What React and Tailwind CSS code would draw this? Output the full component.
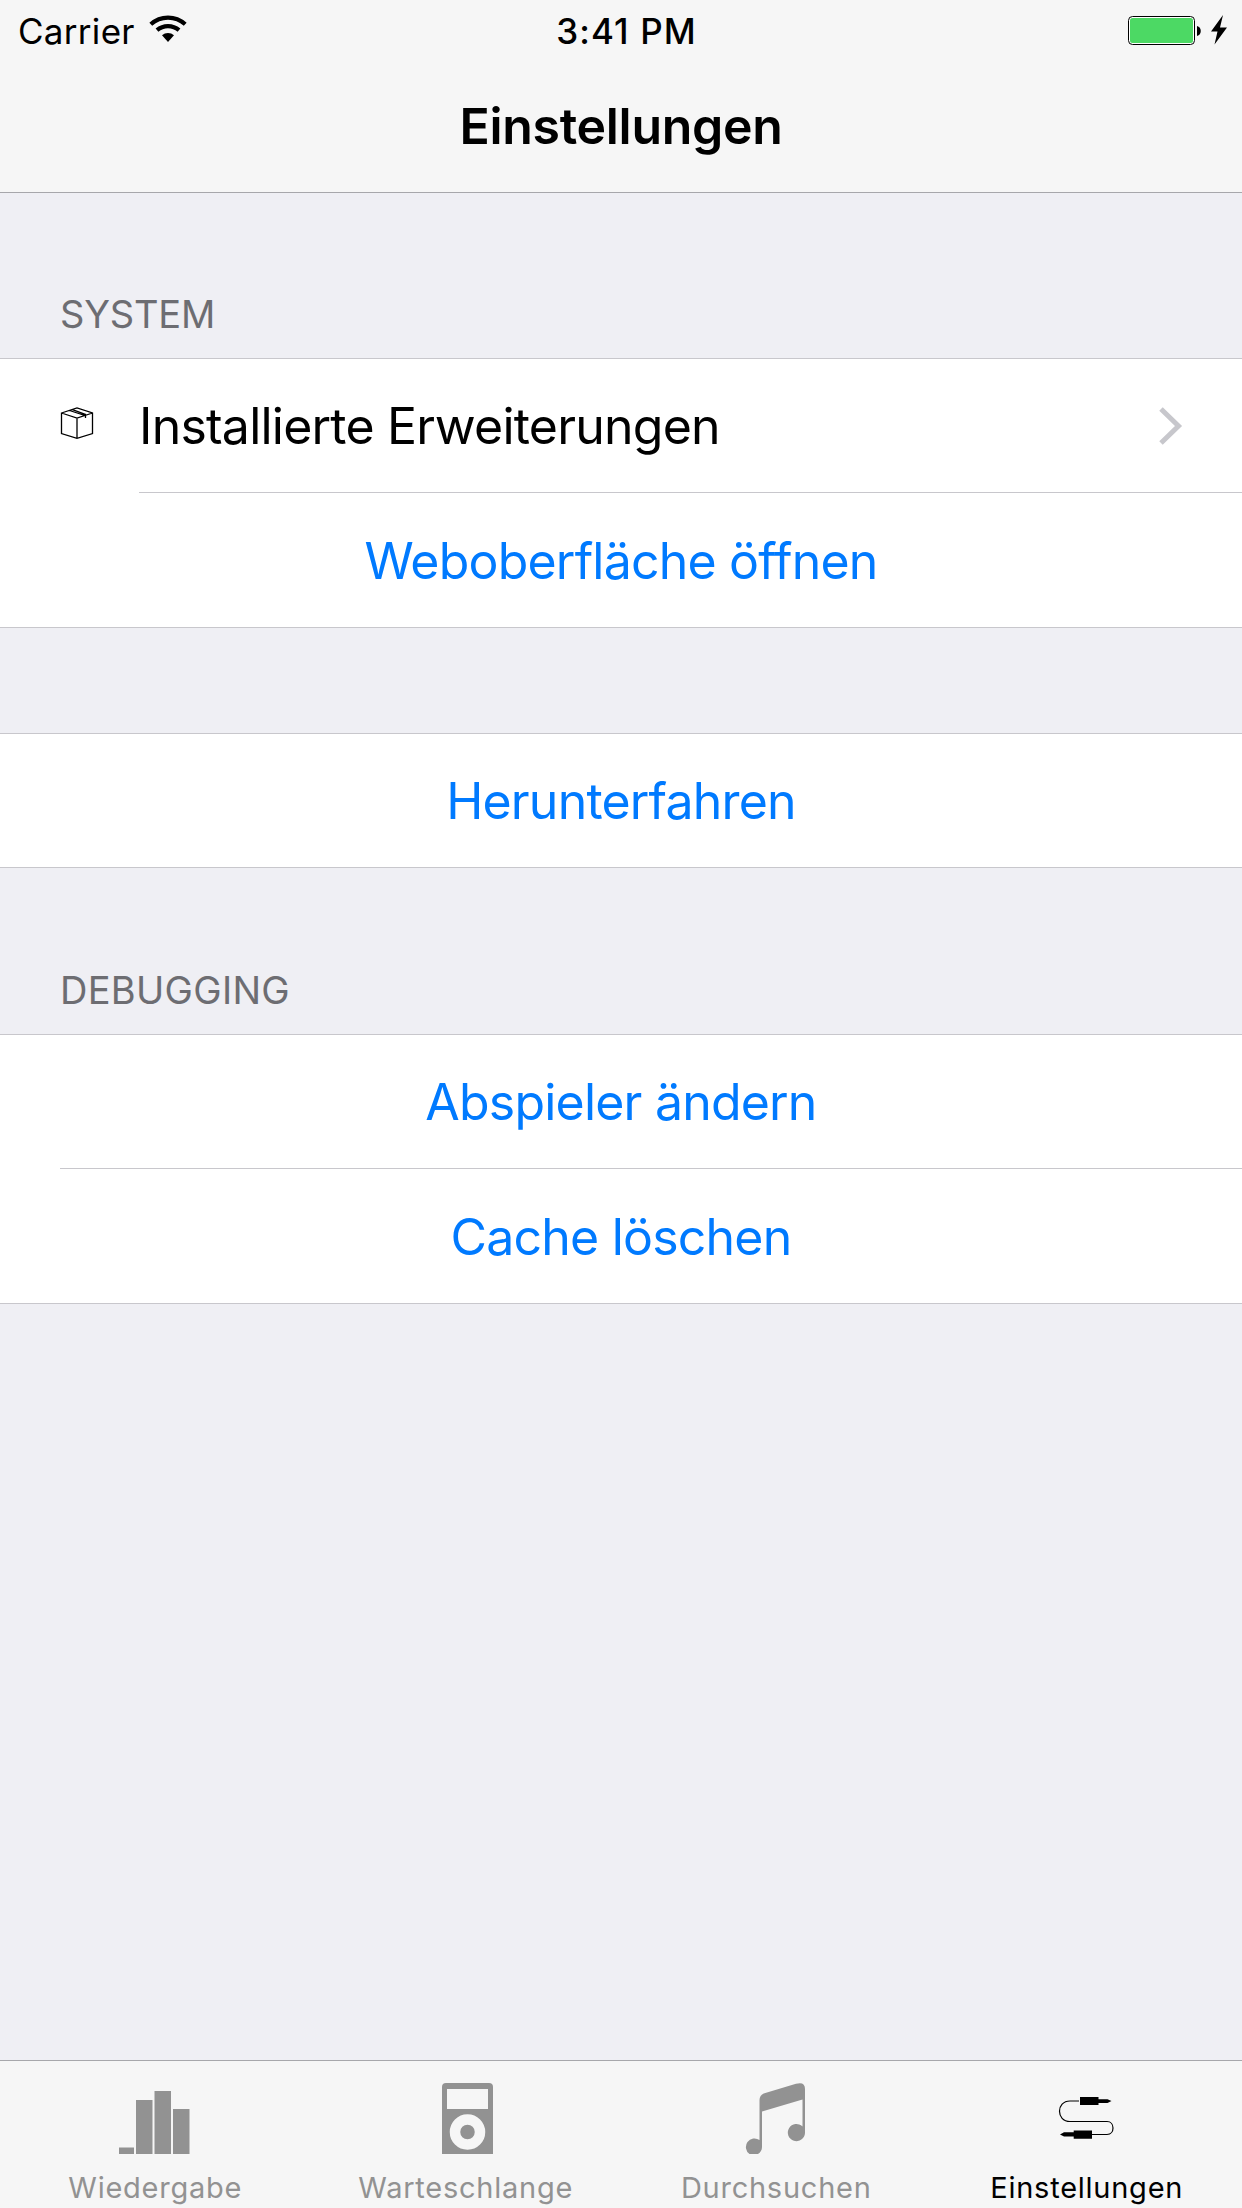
function Separator({ inset = "" }) {
  return (
    <div className={inset}>
      <div className="h-px bg-[#c8c7cc]" />
    </div>
  );
}

function ActionRow({ children, className }) {
  return (
    <button className={`flex w-full items-center justify-center whitespace-nowrap text-[50px] leading-[60px] tracking-[-0.8px] text-[#007aff] ${className}`}>
      {children}
    </button>
  );
}

function SectionTitle({ children, className }) {
  return (
    <h2 className={`px-[60px] text-[38px] leading-[46px] text-[#6d6d72] ${className}`}>
      <span>{children}</span>
    </h2>
  );
}

function WifiIcon() {
  return (
    <svg className="h-[28px] w-[38px]" viewBox="0 0 38 28" fill="none" stroke="#000" strokeWidth="4.2">
      <path d="M1.8 9.3a25.5 25.5 0 0 1 34.4 0" />
      <path d="M8 15.2a16.8 16.8 0 0 1 22 0" />
      <path d="M13 20.2a9.5 9.5 0 0 1 12 0l-6 6.8z" fill="#000" stroke="none" />
    </svg>
  );
}

function BatteryIcon() {
  return (
    <svg className="h-[30px] w-[100px]" viewBox="0 0 100 30">
      <rect x="0.5" y="1.5" width="66" height="28" rx="4" fill="#fff" stroke="#000" />
      <rect x="2" y="3" width="63" height="25" rx="2.5" fill="#4cd964" />
      <path d="M69 11c5 .8 5 9.200 0 10z" fill="#000" />
      <path d="M95 0 83 16.500h6.500L86.500 29.500 99 12.500h-7z" fill="#000" />
    </svg>
  );
}

function PackageIcon() {
  return (
    <svg className="h-[34px] w-[34px]" viewBox="0 0 34 34" fill="none" stroke="#000" strokeWidth="1.3">
      <path d="M1.500 7 17 2l15.500 5v20.500L17 32.300 1.500 27.500zM1.500 7 17 12l15.500-5M17 12v20.300M9.500 4.500 25.500 9.700v2.300M12.500 3.700 26 8.600" />
    </svg>
  );
}

function BarsIcon() {
  return (
    <svg className="h-[75px] w-[75px]" viewBox="0 0 75 75" fill="#929292">
      <path d="M1 64.500h15V71H1zM18 17h16.500v54H18zM36.500 8H53v63H36.500zM55 26h16.500v45H55z" />
    </svg>
  );
}

function PlayerIcon() {
  return (
    <svg className="ml-[3px] h-[75px] w-[75px]" viewBox="0 0 75 75">
      <path d="M12 71V4a4 4 0 0 1 4-4h43a4 4 0 0 1 4 4v67z" fill="#929292" />
      <path d="M17 6h41v20H17z" fill="#f6f6f6" />
      <circle cx="37.500" cy="49" r="12.500" fill="none" stroke="#f6f6f6" strokeWidth="10.500" />
    </svg>
  );
}

function NoteIcon() {
  return (
    <svg className="ml-[6px] h-[75px] w-[75px]" viewBox="0 0 75 75" fill="#929292">
      <path d="M17.500 57V17q0-5 5-6.800L54 .800q9-2.500 9 5.200v44a8.600 8.600 0 1 1-2.500-6.500V16.500l-40.500 12V64c0 3-1.500 5.500-4 7H7.500a8.600 8.600 0 1 1 10-14z" />
    </svg>
  );
}

function CableIcon() {
  return (
    <svg className="mr-[9px] h-[75px] w-[75px]" viewBox="0 0 75 75">
      <path d="M34 18H25C11 18 11 38.500 25 38.500H62C70 38.500 70 51.500 62 51.500H45" fill="none" stroke="#000" strokeWidth="1.200" />
      <path d="M35 14h18.500v2.200h9l4 1.800-4 2h-9V22H35zM47 47.500v8.200H28.700v-2.200H19l-4-2 4-2.200h9.700v-1.800z" />
    </svg>
  );
}

function Tab({ icon, label, className }) {
  return (
    <button className="flex flex-1 flex-col items-center pt-[22px]">
      {icon}
      <span className={`mt-[12px] whitespace-nowrap text-[29px] leading-[36px] tracking-[0.75px] ${className}`}>{label}</span>
    </button>
  );
}

export default function App() {
  return (
    <div className="flex h-[2208px] w-[1242px] flex-col bg-[#efeff4] font-['Inter',sans-serif] text-black">
      <header className="flex h-[193px] flex-col border-b border-[#a7a7ab] bg-[#f6f6f6]">
        <div className="grid h-[60px] grid-cols-3 px-[18px]">
          <div className="flex items-start gap-[14px]">
            <span className="pt-[10px] text-[35px] leading-[42px] tracking-[0.3px]">Carrier</span>
            <span className="pt-[15px]"><WifiIcon /></span>
          </div>
          <div className="pl-[11px] pt-[10px] text-center text-[35px] font-medium leading-[42px] tracking-[1.1px]">3:41 PM</div>
          <div className="flex justify-end pt-[15px]">
            <span className="-mr-[4px]"><BatteryIcon /></span>
          </div>
        </div>
        <h1 className="pt-[36px] text-center text-[50px] font-semibold leading-[60px] tracking-[-0.3px]">Einstellungen</h1>
      </header>

      <main className="flex-1">
        <SectionTitle className="pb-[21px] pt-[98px] tracking-[-0.2px]">SYSTEM</SectionTitle>
        <Separator />
        <div className="bg-white">
          <div className="flex h-[133px] items-center pr-[58px]">
            <span className="ml-[60px] mt-[-6px]"><PackageIcon /></span>
            <span className="ml-[45px] flex-1 whitespace-nowrap text-[50px] leading-[60px] tracking-[-0.78px]">Installierte Erweiterungen</span>
            <svg className="h-[42px] w-[26px]" viewBox="0 0 26 42" fill="none" stroke="#c7c7cc" strokeWidth="5">
              <path d="m3 4 17.500 17L3 38" />
            </svg>
          </div>
          <Separator inset="pl-[139px]" />
          <ActionRow className="h-[134px] pt-[2px]">Weboberfläche öffnen</ActionRow>
        </div>
        <Separator />
        <div className="h-[105px]" />
        <Separator />
        <div className="bg-white">
          <ActionRow className="h-[133px]">Herunterfahren</ActionRow>
        </div>
        <Separator />
        <SectionTitle className="pb-[21px] pt-[99px] tracking-[0.3px]">DEBUGGING</SectionTitle>
        <Separator />
        <div className="bg-white">
          <ActionRow className="h-[133px]">Abspieler ändern</ActionRow>
          <Separator inset="pl-[60px]" />
          <ActionRow className="h-[134px] pt-[2px]">Cache löschen</ActionRow>
        </div>
        <Separator />
      </main>

      <nav className="flex h-[148px] border-t border-[#a7a7ab] bg-[#f6f6f6]">
        <Tab icon={<BarsIcon />} label="Wiedergabe" className="text-[#929292]" />
        <Tab icon={<PlayerIcon />} label="Warteschlange" className="text-[#929292]" />
        <Tab icon={<NoteIcon />} label="Durchsuchen" className="text-[#929292]" />
        <Tab icon={<CableIcon />} label="Einstellungen" className="text-black" />
      </nav>
    </div>
  );
}
